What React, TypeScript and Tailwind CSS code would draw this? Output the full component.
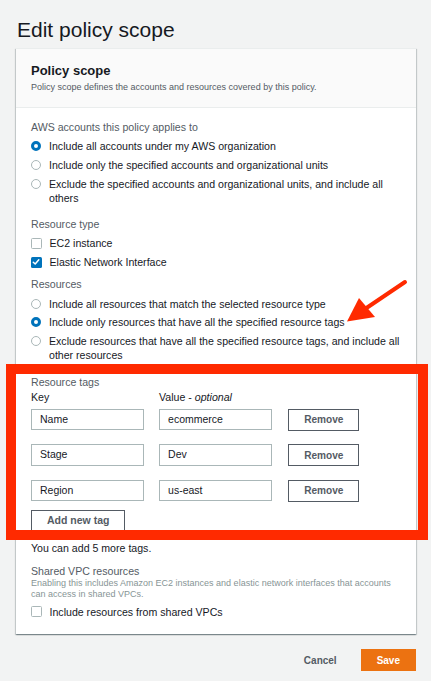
import React from "react";

function Radio({ checked }: { checked?: boolean }) {
  return (
    <span className="flex h-[14px] shrink-0 items-center">
      {checked ? (
        <span className="box-border block h-[10px] w-[10px] rounded-full border-[3px] border-[#0073bb] bg-white" />
      ) : (
        <span className="box-border block h-[10px] w-[10px] rounded-full border border-[#aab7b8] bg-white" />
      )}
    </span>
  );
}

function Checkbox({ checked }: { checked?: boolean }) {
  return (
    <span className="flex h-[14px] shrink-0 items-center">
      {checked ? (
        <span className="box-border flex h-[10.5px] w-[10.5px] items-center justify-center rounded-[1.5px] bg-[#0073bb]">
          <svg width="8" height="8" viewBox="0 0 8 8">
            <path d="M1.3 4.2 L3.2 6 L6.8 1.8" fill="none" stroke="white" strokeWidth="1.5" strokeLinecap="round" strokeLinejoin="round" />
          </svg>
        </span>
      ) : (
        <span className="box-border block h-[10.5px] w-[10.5px] rounded-[1.5px] border border-[#aab7b8] bg-white" />
      )}
    </span>
  );
}

function Option({ children, control }: { children: React.ReactNode; control: React.ReactNode }) {
  return (
    <div className="flex items-start gap-[8px]">
      {control}
      <span className="text-[10.6px] leading-[14px] text-[#16191f]">{children}</span>
    </div>
  );
}

function Label({ children, className = "" }: { children: React.ReactNode; className?: string }) {
  return <div className={"text-[10.6px] leading-[14px] text-[#545b64] " + className}>{children}</div>;
}

function TagRow({ k, v }: { k: string; v: string }) {
  return (
    <div className="flex items-center">
      <div className="box-border flex h-[21.5px] w-[112.5px] items-center border border-[#aab7b8] bg-white pl-[8px] text-[10.5px] text-[#16191f]">
        {k}
      </div>
      <div className="ml-[15.6px] box-border flex h-[21.5px] w-[113.4px] items-center border border-[#aab7b8] bg-white pl-[8px] text-[10.5px] text-[#16191f]">
        {v}
      </div>
      <div className="ml-[15.6px] box-border flex h-[22px] w-[71.4px] items-center justify-center border border-[#545b64] bg-white text-[10.1px] font-bold text-[#545b64]">
        Remove
      </div>
    </div>
  );
}

export default function App() {
  return (
    <div className="relative min-h-[681px] w-[431px] overflow-hidden bg-[#f2f3f3] font-['Liberation_Sans',Arial,sans-serif] text-[#16191f]">
      <h1 className="pl-[17px] pt-[16.5px] text-[21px] font-normal leading-[25px] text-[#16191f]">Edit policy scope</h1>

      <div className="ml-[16px] mt-[6.5px] w-[400px] border-t border-[#eaeded] bg-white shadow-[0_1px_1px_0_rgba(0,28,36,0.3),1px_1px_1px_0_rgba(0,28,36,0.15),-1px_1px_1px_0_rgba(0,28,36,0.15)]">
        <div className="border-b border-[#eaeded] bg-[#fafafa] px-[15px] pb-[14.5px] pt-[13.7px]">
          <h2 className="text-[13px] font-bold leading-[16px] text-[#16191f]">Policy scope</h2>
          <p className="mt-[2.3px] text-[9px] leading-[12px] text-[#545b64]">
            Policy scope defines the accounts and resources covered by this policy.
          </p>
        </div>

        <div className="pb-[15px] pl-[15px] pr-[12px] pt-[11.8px]">
          <Label>AWS accounts this policy applies to</Label>
          <div className="mt-[4.3px] flex flex-col gap-[5px]">
            <Option control={<Radio checked />}>Include all accounts under my AWS organization</Option>
            <Option control={<Radio />}>Include only the specified accounts and organizational units</Option>
            <Option control={<Radio />}>
              Exclude the specified accounts and organizational units, and include all others
            </Option>
          </div>

          <Label className="mt-[12.7px]">Resource type</Label>
          <div className="mt-[5px] flex flex-col gap-[5px]">
            <Option control={<Checkbox />}>EC2 instance</Option>
            <Option control={<Checkbox checked />}>Elastic Network Interface</Option>
          </div>

          <Label className="mt-[8px]">Resources</Label>
          <div className="mt-[5.4px] flex flex-col gap-[4.5px]">
            <Option control={<Radio />}>Include all resources that match the selected resource type</Option>
            <Option control={<Radio checked />}>Include only resources that have all the specified resource tags</Option>
            <Option control={<Radio />}>
              Exclude resources that have all the specified resource tags, and include all other resources
            </Option>
          </div>

          <Label className="mt-[13px]">Resource tags</Label>
          <div className="mt-[1px] flex text-[10.6px] leading-[14px] text-[#16191f]">
            <span className="w-[128.1px]">Key</span>
            <span>
              Value - <i>optional</i>
            </span>
          </div>
          <div className="mt-[5px] flex flex-col gap-[13.5px]">
            <TagRow k="Name" v="ecommerce" />
            <TagRow k="Stage" v="Dev" />
            <TagRow k="Region" v="us-east" />
          </div>
          <div className="mt-[8.6px] box-border flex h-[22px] w-[94.4px] items-center justify-center border border-[#545b64] bg-white text-[10.5px] font-bold text-[#545b64]">
            Add new tag
          </div>

          <div className="mt-[9px] text-[10.6px] leading-[14px] text-[#16191f]">You can add 5 more tags.</div>

          <Label className="mt-[9px]">Shared VPC resources</Label>
          <p className="text-[9px] leading-[10.7px] text-[#879596]">
            Enabling this includes Amazon EC2 instances and elastic network interfaces that accounts can access in shared VPCs.
          </p>
          <div className="mt-[5px]">
            <Option control={<Checkbox />}>Include resources from shared VPCs</Option>
          </div>
        </div>
      </div>

      <div className="mt-[15px] flex items-center justify-end gap-[24px] pr-[15px]">
        <span className="text-[10px] font-bold text-[#545b64]">Cancel</span>
        <div className="flex h-[22.7px] items-center bg-[#ec7211] px-[16px] text-[10px] font-bold text-white">Save</div>
      </div>

      {/* annotation overlay */}
      <div className="pointer-events-none absolute left-[6px] top-[364px] box-border h-[176px] w-[422px] border-[10px] border-[#ff2a00]" />
      <svg className="pointer-events-none absolute left-0 top-0" width="431" height="681" viewBox="0 0 431 681">
        <line x1="405" y1="282" x2="362" y2="311" stroke="#ff2a00" strokeWidth="4" strokeLinecap="round" />
        <polygon points="347,321.5 359,298 375,317" fill="#ff2a00" />
      </svg>
    </div>
  );
}
